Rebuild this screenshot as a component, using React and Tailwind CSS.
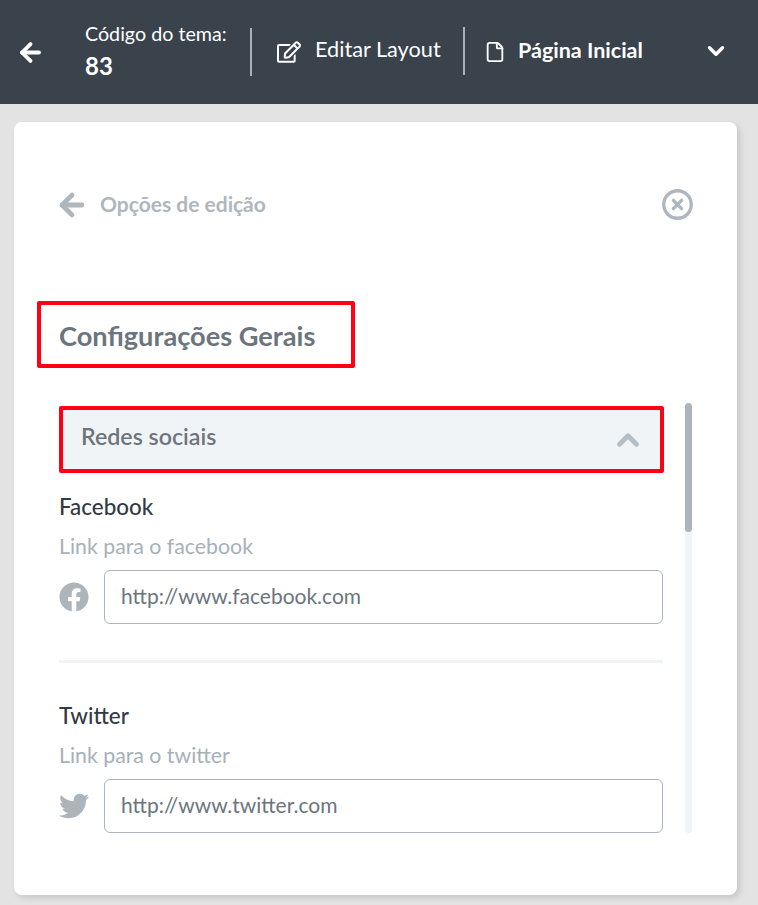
import { ArrowLeft, ChevronDown, ChevronUp, File, CircleX } from "lucide-react"
import { FaFacebook, FaTwitter, FaRegEdit } from "react-icons/fa"

const font = "font-['Lato','Noto_Sans',sans-serif]"

function Field({ label, hint, url, icon, divider }) {
  return (
    <div className={divider ? "border-b-[3px] border-[#f1f4f7] pb-[36px] mb-[39px]" : ""}>
      <p className="text-[22.4px] leading-[28px] font-medium text-[#343a45]">{label}</p>
      <p className="mt-[11px] text-[21.3px] leading-[28px] text-[#a6b1b9]">{hint}</p>
      <div className="mt-[10px] flex items-center">
        <div className="w-[45px] text-[#acb4bc]">{icon}</div>
        <div className="flex h-[54px] flex-1 items-center rounded-[6px] border border-[#acb4bd] px-[16px] pb-[2px] text-[21px] text-[#6c757d]">
          {url}
        </div>
      </div>
    </div>
  )
}

export default function App() {
  return (
    <div className={`h-[905px] w-[758px] overflow-hidden bg-[#e3e3e3] ${font}`}>
      {/* Top bar */}
      <div className="flex h-[104px] items-center bg-[#3a424c] text-white">
        <ArrowLeft size={29} strokeWidth={3.2} className="ml-[16px]" />
        <div className="ml-[40px] w-[165px]">
          <p className="-mt-[2px] text-[19.7px] leading-[24px]">Código do tema:</p>
          <p className="mt-[5px] text-[24px] font-bold leading-[30px]">83</p>
        </div>
        <div className="h-[48px] w-[2px] border-x border-[#aab0b6] bg-[#3a424c]" />
        <FaRegEdit size={24} className="ml-[25px] mb-[1px]" />
        <span className="mb-[5px] ml-[14px] w-[148px] text-[21.7px]">Editar Layout</span>
        <div className="mb-[3px] h-[48px] w-[2px] border-x border-[#aab0b6] bg-[#3a424c]" />
        <File size={22} strokeWidth={2} className="mb-[1px] ml-[19px]" />
        <span className="mb-[4px] ml-[12px] w-[185px] text-[21.5px] font-bold">Página Inicial</span>
        <ChevronDown size={26} strokeWidth={3.2} className="mb-[2px]" />
      </div>

      {/* Card */}
      <div className="mx-[14px] mt-[18px] h-[773px] w-[723px] rounded-[8px] bg-white px-[45px] pt-[66px] shadow-[3px_3px_6px_rgba(0,0,0,0.12)]">
        <div className="flex h-[34px] items-center justify-between text-[#aeb6be]">
          <div className="flex items-center">
            <ArrowLeft size={34} strokeWidth={3.4} className="-ml-[4px] -mt-[1px]" />
            <span className="mb-[2px] ml-[11px] text-[21px] font-bold">Opções de edição</span>
          </div>
          <CircleX size={33} strokeWidth={2.4} className="-mr-[2px] -mt-[1px]" />
        </div>

        <div className="-ml-[22px] mt-[79px] flex h-[67px] w-[318px] items-center rounded-[2px] border-[4px] border-[#ff0014] pl-[18px]">
          <h1 className="mt-[4px] text-[27.2px] font-bold text-[#6c757d]">Configurações Gerais</h1>
        </div>

        <div className="mt-[35px] flex h-[430px] justify-between">
          <div className="h-[430px] w-[605px] overflow-hidden">
            <div className="mt-[3px] flex h-[67px] items-center justify-between rounded-[2px] border-[4px] border-[#ff0014] bg-[#f1f4f7] pl-[18px] pr-[15px]">
              <span className="mb-[6px] text-[23.2px] font-semibold text-[#6c757d]">Redes sociais</span>
              <ChevronUp size={34} strokeWidth={3.4} className="text-[#b5bdc4]" />
            </div>
            <div className="mt-[20px] pr-[1px]">
              <Field
                divider
                label="Facebook"
                hint="Link para o facebook"
                url="http://www.facebook.com"
                icon={<FaFacebook size={30} />}
              />
              <Field
                label="Twitter"
                hint="Link para o twitter"
                url="http://www.twitter.com"
                icon={<FaTwitter size={30} />}
              />
            </div>
          </div>
          <div className="h-[430px] w-[7px] rounded-full bg-[#f1f4f7]">
            <div className="h-[129px] rounded-full bg-[#adb4bc]" />
          </div>
        </div>
      </div>
    </div>
  )
}
